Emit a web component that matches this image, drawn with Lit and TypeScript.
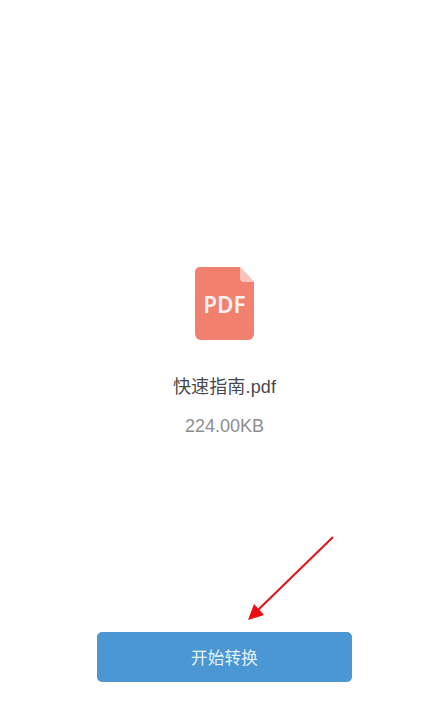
import { LitElement, html, css } from "lit";
import { customElement } from "lit/decorators.js";

@customElement("app-root")
export class AppRoot extends LitElement {
  static styles = css`
    :host {
      display: block;
      position: relative;
      width: 429px;
      height: 721px;
      background: #fff;
      overflow: hidden;
      font-family: "Liberation Sans", "Noto Sans CJK SC", sans-serif;
    }
    .page {
      height: 100%;
      box-sizing: border-box;
      display: flex;
      flex-direction: column;
      align-items: center;
      padding: 267px 0 39px 20px;
    }
    .icon {
      position: relative;
      width: 59px;
      height: 73px;
      display: block;
    }
    .icon svg {
      display: block;
      width: 100%;
      height: 100%;
    }
    .icon span {
      position: absolute;
      left: 0;
      right: 0;
      top: 22px;
      text-align: center;
      color: #fdf1ee;
      font: 600 22.5px/32px "Noto Sans", sans-serif;
    }
    .name {
      margin-top: 35px;
      font-size: 18px;
      line-height: 24px;
      color: #484848;
      letter-spacing: 0.15px;
    }
    .size {
      margin-top: 15px;
      font-size: 18px;
      line-height: 24px;
      color: #8e8e8e;
    }
    .btn {
      margin-top: auto;
      width: 255px;
      height: 50px;
      border: 0;
      border-radius: 5px;
      background: #4a97d4;
      color: #e6f3fb;
      font-size: 16.5px;
      letter-spacing: 0.3px;
      font-family: "Noto Sans CJK SC", sans-serif;
    }
    .arrow {
      position: absolute;
      left: 0;
      top: 0;
      width: 429px;
      height: 721px;
      pointer-events: none;
    }
  `;

  render() {
    return html`
      <div class="page">
        <div class="icon">
          <svg viewBox="0 0 59 73">
            <path d="M5 0H45L59 15V67a6 6 0 0 1-6 6H6a6 6 0 0 1-6-6V5a5 5 0 0 1 5-5Z" fill="#f1806e" />
            <path d="M45 0L59 15H49a4 4 0 0 1-4-4Z" fill="#f8c4bb" />
          </svg>
          <span>PDF</span>
        </div>
        <div class="name">快速指南.pdf</div>
        <div class="size">224.00KB</div>
        <button class="btn">开始转换</button>
      </div>
      <svg class="arrow" viewBox="0 0 429 721">
        <line x1="333" y1="537" x2="258" y2="610" stroke="#dc1a1f" stroke-width="2.2" />
        <path d="M248 620L254 604L264 615Z" fill="#ee0d12" />
      </svg>
    `;
  }
}
